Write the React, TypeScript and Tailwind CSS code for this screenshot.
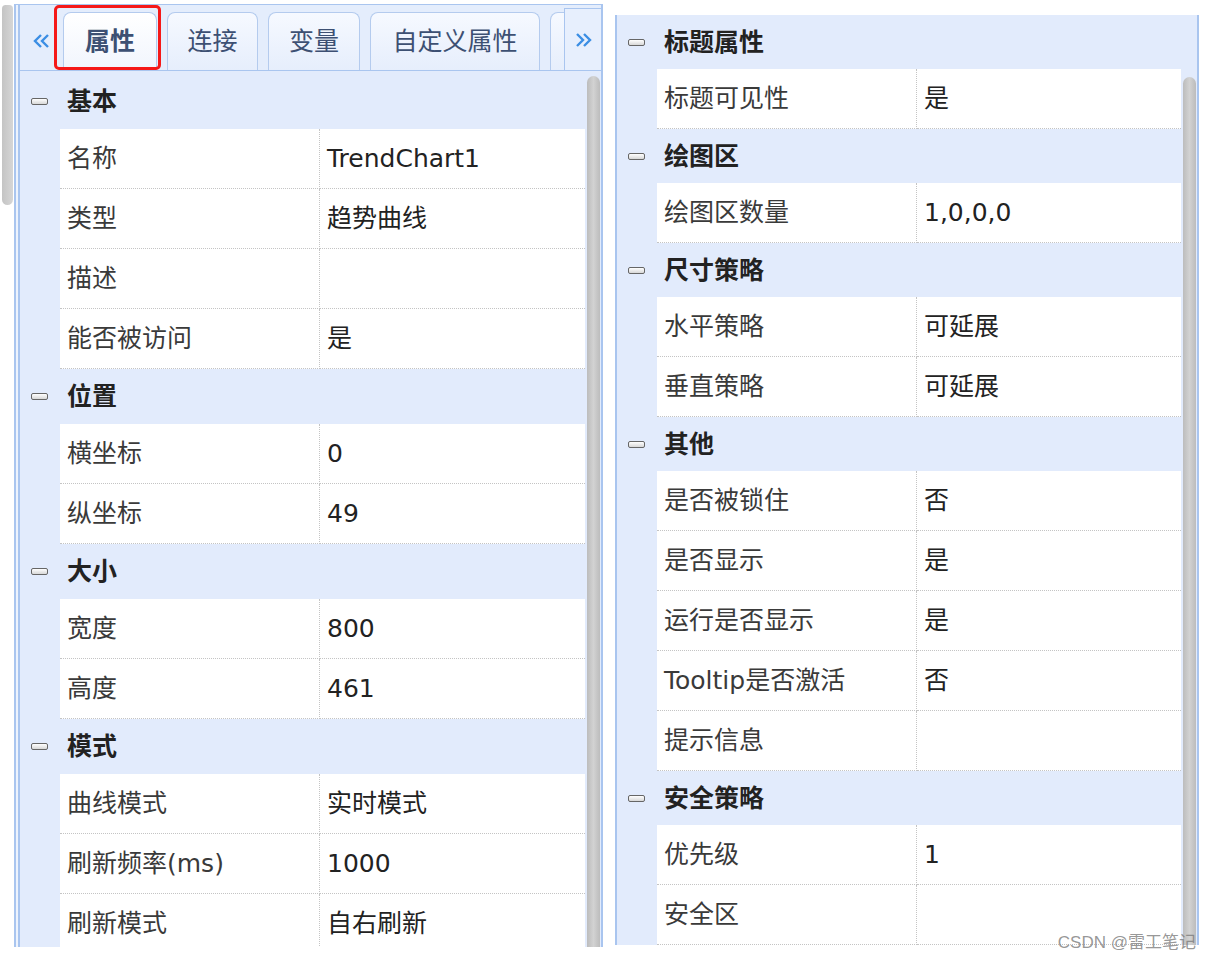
import React from "react";

// property grid data
interface Row {
  label: string;
  value: string;
}

interface Section {
  title: string;
  rows: Row[];
}

const leftSections: Section[] = [
  {
    title: "基本",
    rows: [
      { label: "名称", value: "TrendChart1" },
      { label: "类型", value: "趋势曲线" },
      { label: "描述", value: "" },
      { label: "能否被访问", value: "是" },
    ],
  },
  {
    title: "位置",
    rows: [
      { label: "横坐标", value: "0" },
      { label: "纵坐标", value: "49" },
    ],
  },
  {
    title: "大小",
    rows: [
      { label: "宽度", value: "800" },
      { label: "高度", value: "461" },
    ],
  },
  {
    title: "模式",
    rows: [
      { label: "曲线模式", value: "实时模式" },
      { label: "刷新频率(ms)", value: "1000" },
      { label: "刷新模式", value: "自右刷新" },
    ],
  },
];

const rightSections: Section[] = [
  { title: "标题属性", rows: [{ label: "标题可见性", value: "是" }] },
  { title: "绘图区", rows: [{ label: "绘图区数量", value: "1,0,0,0" }] },
  {
    title: "尺寸策略",
    rows: [
      { label: "水平策略", value: "可延展" },
      { label: "垂直策略", value: "可延展" },
    ],
  },
  {
    title: "其他",
    rows: [
      { label: "是否被锁住", value: "否" },
      { label: "是否显示", value: "是" },
      { label: "运行是否显示", value: "是" },
      { label: "Tooltip是否激活", value: "否" },
      { label: "提示信息", value: "" },
    ],
  },
  {
    title: "安全策略",
    rows: [
      { label: "优先级", value: "1" },
      { label: "安全区", value: "" },
    ],
  },
];

const Minus = () => (
  <span className="block w-[17px] h-[7px] rounded-[2px] border border-[#666] bg-gradient-to-b from-white to-[#d8d8d8] shrink-0" />
);

const Chevrons = ({ dir }: { dir: "left" | "right" }) => (
  <svg width="18" height="16" viewBox="0 0 18 16" fill="none">
    {dir === "left" ? (
      <>
        <polyline points="8,2 2,8 8,14" stroke="#3b8ee4" strokeWidth="2.4" />
        <polyline points="15,2 9,8 15,14" stroke="#3b8ee4" strokeWidth="2.4" />
      </>
    ) : (
      <>
        <polyline points="3,2 9,8 3,14" stroke="#3b8ee4" strokeWidth="2.4" />
        <polyline points="10,2 16,8 10,14" stroke="#3b8ee4" strokeWidth="2.4" />
      </>
    )}
  </svg>
);

function PropertyList({ sections, headH }: { sections: Section[]; headH: string }) {
  return (
    <div className="flex flex-col flex-1 min-w-0">
      {sections.map((s) => (
        <div key={s.title} className="flex flex-col">
          <div className={`flex items-center pl-[11px] ${headH}`}>
            <Minus />
            <span className="ml-[19px] text-[25px] font-bold text-[#222] leading-none">{s.title}</span>
          </div>
          {s.rows.map((r) => (
            <div key={r.label} className="flex h-[60px] pl-[40px]">
              <div className="w-[260px] shrink-0 bg-white flex items-center pl-[7px] border-r border-b border-dotted border-[#c4c4c4] text-[25px] text-[#3a3a3a] leading-none whitespace-nowrap">
                {r.label}
              </div>
              <div className="flex-1 bg-white flex items-center pl-[7px] border-b border-dotted border-[#c4c4c4] text-[25px] text-[#222] leading-none whitespace-nowrap">
                {r.value}
              </div>
            </div>
          ))}
        </div>
      ))}
    </div>
  );
}

const Scrollbar = ({ top }: { top: string }) => (
  <div className={`w-[16px] shrink-0 flex justify-center ${top}`}>
    <div className="w-[13px] h-full rounded-t-full bg-gradient-to-r from-[#bcbcbc] via-[#d2d2d2] to-[#bcbcbc]" />
  </div>
);

export default function App() {
  const tabs = [
    { id: "prop", text: "属性", w: "w-[94px]", active: true },
    { id: "conn", text: "连接", w: "w-[91px]" },
    { id: "var", text: "变量", w: "w-[92px]" },
    { id: "custom", text: "自定义属性", w: "w-[170px]" },
    { id: "more", text: "", w: "w-[80px]" },
  ];

  return (
    <div className="relative w-[1212px] h-[957px] bg-white overflow-hidden flex items-start font-['DejaVu_Sans','Noto_Sans_CJK_SC',sans-serif]">
      {/* outer scrollbar */}
      <div className="w-[11px] h-[200px] ml-[2px] mt-[5px] rounded-b-md rounded-t-sm bg-gradient-to-r from-[#c4c4c4] to-[#d6d6d6] shrink-0" />

      {/* left panel */}
      <div className="ml-[1px] mt-[4px] w-[589px] h-[943px] shrink-0 flex border-l-2 border-t border-r-2 border-[#a9c5ef] bg-[#edf3fd] pl-[2px]">
        <div className="flex flex-col flex-1 border-l-2 border-[#a9c5ef] bg-[#e2ebfc] overflow-hidden">
          {/* tab bar */}
          <div className="relative flex items-end h-[66px] shrink-0 border-b border-[#a9c5ef] bg-[#e4edfc]">
            <div className="w-[43px] h-full flex items-center justify-center pt-[6px]">
              <Chevrons dir="left" />
            </div>
            <div className="flex gap-[10px] w-[501px] overflow-hidden h-[58px]">
              {tabs.map((t) => (
                <div
                  key={t.id}
                  className={`${t.w} shrink-0 h-[58px] rounded-t-[8px] border border-b-0 border-[#b4cbee] flex items-center justify-center text-[25px] leading-none text-[#3d5073] ${
                    t.active
                      ? "bg-gradient-to-b from-white to-[#f1f5fd] font-bold"
                      : "bg-gradient-to-b from-[#f6f9ff] to-[#e6eefc]"
                  }`}
                >
                  {t.text}
                </div>
              ))}
            </div>
            <div className="w-[37px] h-[62px] border-l border-t border-[#a9c5ef] bg-[#e7effd] flex items-center justify-center">
              <Chevrons dir="right" />
            </div>
            {/* highlight box round the active tab */}
            <span className="absolute left-[34px] top-0 w-[107px] h-[65px] border-[3px] border-[#f51818] rounded-[5px]" />
          </div>

          {/* grid body */}
          <div className="flex flex-1 min-h-0 pt-[3px]">
            <PropertyList sections={leftSections} headH="h-[55px]" />
            <Scrollbar top="pt-[2px]" />
          </div>
        </div>
      </div>

      {/* right panel */}
      <div className="ml-[12px] mt-[15px] w-[584px] h-[930px] shrink-0 flex border-l-2 border-r-2 border-[#a9c5ef] bg-[#e2ebfc] overflow-hidden">
        <PropertyList sections={rightSections} headH="h-[54px]" />
        <Scrollbar top="pt-[62px]" />
      </div>

      <span className="absolute right-[16px] bottom-[6px] text-[17px] leading-none text-[#7c7c7c]/80 font-['Liberation_Sans','Noto_Sans_CJK_SC',sans-serif]">
        CSDN @雷工笔记
      </span>
    </div>
  );
}
